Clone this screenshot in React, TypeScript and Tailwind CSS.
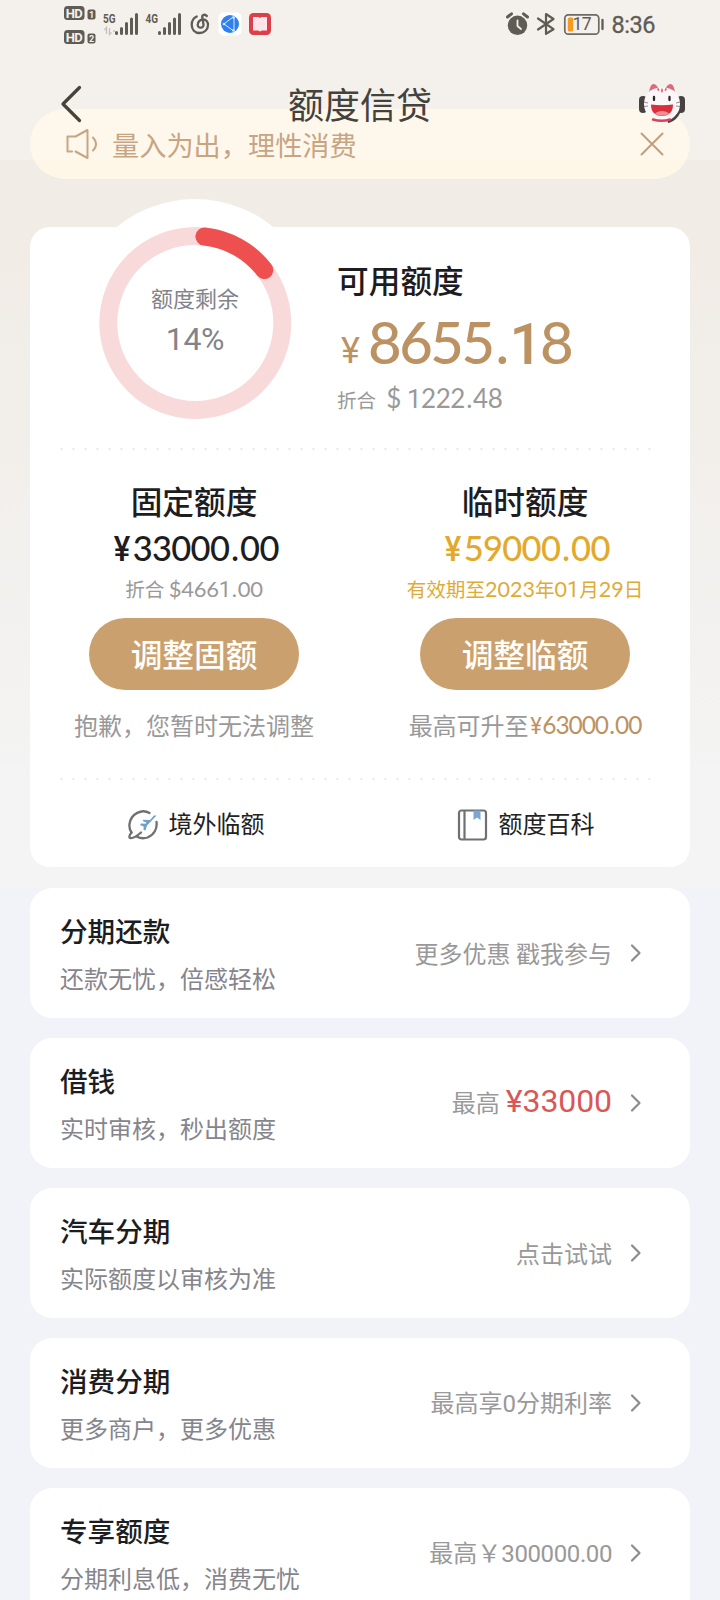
import type { ReactNode } from "react";

const cjk = "font-['Noto_Sans_CJK_SC',sans-serif]";

/** Figures in Lato, with the plain stroke "1" and the currency sign taken from Roboto. */
function Figures({ value, className = "" }: { value: string; className?: string }) {
  return (
    <span className={`font-[Lato,sans-serif] whitespace-pre ${className}`}>
      {value.split("").map((c, i) => {
        if (c === "1") return <span key={i} className="font-[Roboto,sans-serif]">{c}</span>;
        if (c === "¥") return <span key={i} className="mr-[0.08em] inline-block origin-right scale-x-90 font-[Roboto,sans-serif]">{c}</span>;
        if (c === ".") return <span key={i} className="mx-[0.05em]">{c}</span>;
        return c;
      })}
    </span>
  );
}

function StatusBar() {
  return (
    <div className="flex h-[50px] items-start justify-between pl-[62px] pr-[64px]">
      <svg width="212" height="50" viewBox="62 0 212 50" fill="#5f5c56">
        <rect x="64" y="6" width="20.500" height="14" rx="3.500" />
        <rect x="64" y="30" width="20.500" height="14" rx="3.500" />
        <rect x="87.500" y="9.500" width="8" height="10" rx="2" />
        <rect x="87.500" y="33.500" width="8" height="10" rx="2" />
        <g fill="#f4f0ea" fontFamily="Roboto, sans-serif" fontWeight="700">
          <text x="65.800" y="17.700" fontSize="13" textLength="17">HD</text>
          <text x="65.800" y="41.700" fontSize="13" textLength="17">HD</text>
          <text x="89" y="17.800" fontSize="9">1</text>
          <text x="89" y="41.800" fontSize="9">2</text>
        </g>
        <g fontFamily="Roboto, sans-serif" fontWeight="700" fontSize="13">
          <text x="103" y="22.500" textLength="12.500" lengthAdjust="spacingAndGlyphs">5G</text>
          <text x="145.500" y="22.500" textLength="12.500" lengthAdjust="spacingAndGlyphs">4G</text>
        </g>
        <path d="M104.500 30l2-2.500V34M109.500 28v6.500l2-2M113 31h2" stroke="#c4c0ba" strokeWidth="1.300" fill="none" />
        <g stroke="#5f5c56" strokeWidth="3" strokeLinecap="round">
          <path d="M116.500 32.500v1M121.500 28.500v5M126.500 23.500v10M131.500 19v14.500M136.500 14.500v19" />
          <path d="M159.500 32.500v1M164.500 28.500v5M169.500 23.500v10M174.500 19v14.500M179.500 14.500v19" />
        </g>
        <path
          d="M206.800 16c-1.500-2-5-1.500-4.500 1.500l1.200 7c.5 3.800-5.500 4.500-5.800.5-.2-3 2.500-5.500 5.300-5.500 3.500 0 5 2.700 5 5.500 0 4.700-3.800 8-8.500 8s-7.800-3.500-7.800-8.200c0-3.800 1.800-6.800 5-8.300"
          fill="none"
          stroke="#5f5c56"
          strokeWidth="2.300"
          strokeLinecap="round"
        />
        <rect x="218.500" y="12.500" width="23" height="23" rx="5" fill="#fff" />
        <circle cx="230" cy="24" r="9" fill="#2f80ee" />
        <path d="M224 24l9-7M224 24l9 6.500M234 18v12" stroke="#d8ebff" strokeWidth="1" />
        <g fill="#d8ebff">
          <circle cx="224" cy="24" r="1.300" />
          <circle cx="233.500" cy="17.500" r="1.300" />
          <circle cx="233.500" cy="30.500" r="1.300" />
        </g>
        <rect x="249" y="13" width="22" height="22" rx="4.500" fill="#dc3f47" />
        <path d="M253 17h5.500l1.500 1 1.500-1H267v13.500h-5l-2 1-2-1h-5z" fill="#ffe5ea" />
      </svg>
      <svg width="152" height="50" viewBox="504 0 152 50" fill="#5f5c56">
        <circle cx="517.500" cy="25.300" r="9.700" />
        <path d="M507.500 17l4-3.200M527.500 17l-4-3.200" stroke="#5f5c56" strokeWidth="3" strokeLinecap="round" />
        <path d="M517.500 20.500v5.500l3.500 3" stroke="#f4f0ea" strokeWidth="1.800" fill="none" strokeLinecap="round" />
        <path
          d="M538 18.500l15.500 10.700-7.500 4.600V14l7.500 5L538 29.500"
          fill="none"
          stroke="#5f5c56"
          strokeWidth="2.200"
          strokeLinecap="round"
          strokeLinejoin="round"
        />
        <rect x="564.800" y="14.800" width="34" height="19.400" rx="3.500" fill="none" stroke="#6e6a64" strokeWidth="1.700" />
        <rect x="567.800" y="17.500" width="5.400" height="14" rx="1.500" fill="#f59b23" />
        <path d="M602.500 20v9" stroke="#5f5c56" strokeWidth="2.300" strokeLinecap="round" />
        <text x="572.500" y="30.300" fontSize="17.500" fontFamily="Roboto, sans-serif" textLength="19">17</text>
        <text x="611.500" y="32.800" fontSize="23.500" fontFamily="Roboto, sans-serif" stroke="#5f5c56" strokeWidth=".3" textLength="44">8:36</text>
      </svg>
    </div>
  );
}

function Mascot() {
  return (
    <svg width="48" height="44" viewBox="0 0 48 44">
      <path d="M11 12c.5-5 2-9 4.500-9s4.500 3 5.500 6zM37 12c-.5-5-2-9-4.500-9S28 6 27 9z" fill="#dd6a7b" />
      <rect x="1" y="15" width="8" height="17" rx="4" fill="#45423f" />
      <rect x="39" y="15" width="8" height="17" rx="4" fill="#45423f" />
      <path d="M41 31c-2 4.500-5 8-10 9.500" stroke="#45423f" strokeWidth="2.800" fill="none" strokeLinecap="round" />
      <path d="M24 6.500c12 0 18 7 18 16.500 0 10-7 15.500-18 15.500S6 33 6 23C6 13.500 12 6.500 24 6.500z" fill="#fbf6f7" />
      <path d="M15 38.500c5 1.500 12 1.500 17 0" stroke="#d8435a" strokeWidth="2.500" fill="none" strokeLinecap="round" />
      <path d="M24 8.500v2M20 8l.5 1M28 8l-.5 1" stroke="#dd6a7b" strokeWidth="1.800" strokeLinecap="round" />
      <path d="M16 16v3M31.500 16v3" stroke="#2d2828" strokeWidth="2.300" strokeLinecap="round" />
      <path d="M13 23.500c7 1 15 1 22 0 0 7.500-4 11.500-11 11.500s-11-4-11-11.500z" fill="#d92e3c" />
      <path d="M17 32.500c3-3.500 11-3.500 14 0-3 3-11 3-14 0z" fill="#f28d90" />
      <path d="M6 21l4 1M6 25.500l4-.5M42 21l-4 1M42 25.500l-4-.5" stroke="#777" strokeWidth=".8" />
    </svg>
  );
}

function Header() {
  return (
    <header className="relative z-10 h-40 shrink-0 bg-[#fffdfa]/25">
      <StatusBar />
      <div className="grid h-[108px] grid-cols-[1fr_auto_1fr] items-center px-[30px]">
        <svg width="24" height="40" viewBox="0 0 24 40" className="ml-[29px]">
          <path d="M20.500 3.500L4 20l16.500 16.500" fill="none" stroke="#46423c" strokeWidth="3.200" strokeLinecap="round" strokeLinejoin="round" />
        </svg>
        <h1 className="-mt-0.5 text-[36px] leading-[40px] font-normal text-[#45413b]">额度信贷</h1>
        <div className="mr-[4px] mb-0.5 justify-self-end">
          <Mascot />
        </div>
      </div>
    </header>
  );
}

function Notice() {
  return (
    <div className="-mt-[51px] flex h-[70px] shrink-0 items-center rounded-[35px] bg-[#fef7e7] pr-[26px] pl-[35px] text-[#b5875a]">
      <svg width="34" height="32" viewBox="0 0 34 32" fill="none" stroke="currentColor" strokeWidth="2" strokeLinecap="round" strokeLinejoin="round">
        <path d="M7 23.500H2.500V8.500h8L22.500 2v28l-12-6.500" />
        <path d="M28 9.500c4.300 4.500 4.300 8.500 0 13" />
      </svg>
      <span className="ml-[13px] text-[27.200px] leading-10 font-normal whitespace-nowrap">量入为出，理性消费</span>
      <svg width="24" height="24" viewBox="0 0 24 24" className="ml-auto" stroke="#ae8055" strokeWidth="2" strokeLinecap="round">
        <path d="M1.500 1.500l21 21M22.500 1.500l-21 21" />
      </svg>
    </div>
  );
}

function Gauge() {
  return (
    <div className="relative -mt-7 ml-[41px] h-[248px] w-[248px]">
      <svg width="248" height="248" viewBox="0 0 248 248" fill="none" className="absolute inset-0">
        <circle cx="124" cy="124" r="124" fill="#fff" />
        <circle cx="124.300" cy="124" r="87" stroke="#f9dadb" strokeWidth="18" />
        <path d="M133.400 37.500A87 87 0 0 1 193.300 71" stroke="#ee5050" strokeWidth="18" strokeLinecap="round" />
      </svg>
      <div className="relative flex h-full flex-col items-center pt-[82px] text-[#83838b]">
        <span className="text-[22px] leading-8 font-normal">额度剩余</span>
        <span className="mt-[8px] font-[Roboto,sans-serif] text-[32px] leading-9 font-normal tracking-[-0.3px]">14%</span>
      </div>
    </div>
  );
}

function DottedLine() {
  return (
    <svg width="600" height="4" className="ml-[30px] block">
      <path d="M1.500 2H592" stroke="#e9e9eb" strokeWidth="2.400" strokeDasharray="0 12" strokeLinecap="round" />
    </svg>
  );
}

function LimitColumn({ title, amount, amountClass, note, button, hint, className = "" }: {
  title: string; amount: string; amountClass: string; note: ReactNode; button: string; hint: ReactNode; className?: string;
}) {
  return (
    <div className={`flex w-[330px] flex-col items-center pt-[31px] ${className}`}>
      <h2 className="text-[31.700px] leading-9 font-medium text-[#1d1d1f]">{title}</h2>
      <div className={`mt-[10px] mb-px pl-[3px] text-[34.500px] leading-9 font-medium tracking-[-0.7px] ${amountClass}`}>
        <Figures value={amount} />
      </div>
      <div className="mt-[9px] flex h-6 items-center whitespace-pre text-[19.600px] leading-6 font-normal">{note}</div>
      <button className="mt-[17px] h-[72px] w-[210px] rounded-full bg-[#cba06f] pb-0.5 text-[31.700px] leading-[70px] font-medium text-[#fffdf8]">
        {button}
      </button>
      <div className="mt-[17px] flex h-9 items-center text-[24px] leading-9 font-normal text-[#999]">{hint}</div>
    </div>
  );
}

function GlobeIcon() {
  return (
    <svg width="32" height="32" viewBox="0 0 32 32" fill="none" stroke="#6f7072" strokeWidth="2.300" strokeLinecap="round">
      <path d="M22.500 4C15-.5 4 4.500 2.500 15c-.4 3 .3 6 2 8.500M29.500 13c1 6.500-2.500 13-9 15.500-4 1.300-7.500.8-10.500-.8" />
      <path d="M4.500 23.500c-2.500 3-2.800 5.500-.8 5.700C6 29.400 10 27 14 23.500" />
      <path d="M29.500 6.500L20 16.500l-1.500 5-2-.5.200-3.500-3.700-1.500 1-1.500 4.500.3 1-1.300-4-1.500 1-1.200 6.500.3 4-4.500z" fill="#6f9fcf" stroke="none" />
    </svg>
  );
}

function BookIcon() {
  return (
    <svg width="32" height="32" viewBox="0 0 32 32" fill="none" stroke="#6f7072" strokeWidth="2.200">
      <rect x="2" y="1.500" width="27" height="29" rx="2.500" />
      <path d="M7.500 2v28" />
      <path d="M16.500 1.500h7V11L20 8.500 16.500 11z" fill="#7ba6d3" stroke="none" />
    </svg>
  );
}

function Quota() {
  return (
    <section className="mt-12 h-[640px] shrink-0 rounded-[20px] bg-white">
      <div className="flex h-[220px]">
        <Gauge />
        <div className="ml-[18px] flex flex-col items-start pt-[34px]">
          <h2 className="text-[31.700px] leading-9 font-medium text-[#1d1d1f]">可用额度</h2>
          <div className="mt-[15px] flex h-[60px] items-baseline leading-[60px] text-[#bd9263]">
            <span className="ml-[4px] w-[27px] -translate-y-px font-[Roboto,sans-serif] text-[36px]">¥</span>
            <Figures value="8655.18" className="text-[58px] font-medium tracking-[-2.500px]" />
          </div>
          <div className="mt-[8px] flex h-9 items-baseline leading-9 text-[#999]">
            <span className="text-[19.600px] font-normal">折合</span>
            <Figures value="$ 1222.48" className="ml-[10px] text-[26px] tracking-[-0.5px]" />
          </div>
        </div>
      </div>
      <DottedLine />
      <div className="flex h-[326px]">
        <LimitColumn
          title="固定额度"
          amount="¥33000.00"
          amountClass="text-[#1d1d1f]"
          className="pr-0.5"
          note={<span className="text-[#999]">折合 <Figures value="$4661.00" className="text-[22px] font-normal tracking-[-0.3px]" /></span>}
          button="调整固额"
          hint="抱歉，您暂时无法调整"
        />
        <LimitColumn
          title="临时额度"
          amount="¥59000.00"
          amountClass="text-[#e3a92c]"
          note={
            <span className="text-[#e0ab35]">
              有效期至<Figures value="2023" className="text-[21.500px] font-normal" />年<Figures value="01" className="text-[21.500px] font-normal" />月
              <Figures value="29" className="text-[21.500px] font-normal" />日
            </span>
          }
          button="调整临额"
          hint={<>最高可升至<Figures value="¥63000.00" className="text-[24.500px] font-normal tracking-[-1.1px] text-[#bd9263]" /></>}
        />
      </div>
      <DottedLine />
      <div className="flex h-[86px] pt-[26px] text-[24px] leading-9 text-[#222]">
        <div className="flex h-9 w-[330px] items-center justify-center gap-[10px] pl-px">
          <GlobeIcon />
          <span className="-mt-1">境外临额</span>
        </div>
        <div className="flex h-9 w-[330px] items-center justify-center gap-[10px] pl-px">
          <BookIcon />
          <span className="-mt-1">额度百科</span>
        </div>
      </div>
    </section>
  );
}

function ProductCard({ title, text, side }: { title: string; text: string; side: ReactNode }) {
  return (
    <section className="flex h-[130px] shrink-0 items-center justify-between rounded-[22px] bg-white pr-12 pl-[30px]">
      <div className="flex flex-col">
        <h3 className="text-[27.600px] leading-[38px] font-medium text-[#1d1d1f]">{title}</h3>
        <p className="mt-[11px] text-[24px] leading-9 font-normal text-[#85858b]">{text}</p>
      </div>
      <div className="flex h-9 items-center text-[24px] leading-9 font-normal text-[#999]">
        <span className="flex items-baseline whitespace-pre">{side}</span>
        <svg width="12" height="20" viewBox="0 0 12 20" className="ml-[18px]" fill="none" stroke="#8c8c8c" strokeWidth="2.200" strokeLinecap="round" strokeLinejoin="round">
          <path d="M2 2.500L9.500 10 2 17.500" />
        </svg>
      </div>
    </section>
  );
}

const products: { title: string; text: string; side: ReactNode }[] = [
  { title: "分期还款", text: "还款无忧，倍感轻松", side: "更多优惠 戳我参与" },
  {
    title: "借钱",
    text: "实时审核，秒出额度",
    side: (
      <span className="-mt-1 flex items-baseline">
        最高<span className="ml-[6px] font-[Roboto,sans-serif] text-[32px] font-normal tracking-[-0.1px] text-[#d95757]">¥33000</span>
      </span>
    ),
  },
  { title: "汽车分期", text: "实际额度以审核为准", side: "点击试试" },
  {
    title: "消费分期",
    text: "更多商户，更多优惠",
    side: <>最高享<span className="font-[Roboto,sans-serif]">0</span>分期利率</>,
  },
  {
    title: "专享额度",
    text: "分期利息低，消费无忧",
    side: <>最高￥<span className="font-[Roboto,sans-serif] tracking-[-0.4px]">300000.00</span></>,
  },
];

export default function App() {
  return (
    <main
      className={`flex h-[1600px] w-[720px] flex-col overflow-hidden bg-[linear-gradient(to_bottom,#f1ece7_0,#f1ece6_250px,#f4f4f4_800px,#f4f4f4_888px,#f2f3f8_888px)] ${cjk}`}
    >
      <Header />
      <div className="flex flex-col px-[30px]">
        <Notice />
        <Quota />
        <div className="mt-[21px] flex flex-col gap-5">
          {products.map((p) => (
            <ProductCard key={p.title} {...p} />
          ))}
        </div>
      </div>
    </main>
  );
}
